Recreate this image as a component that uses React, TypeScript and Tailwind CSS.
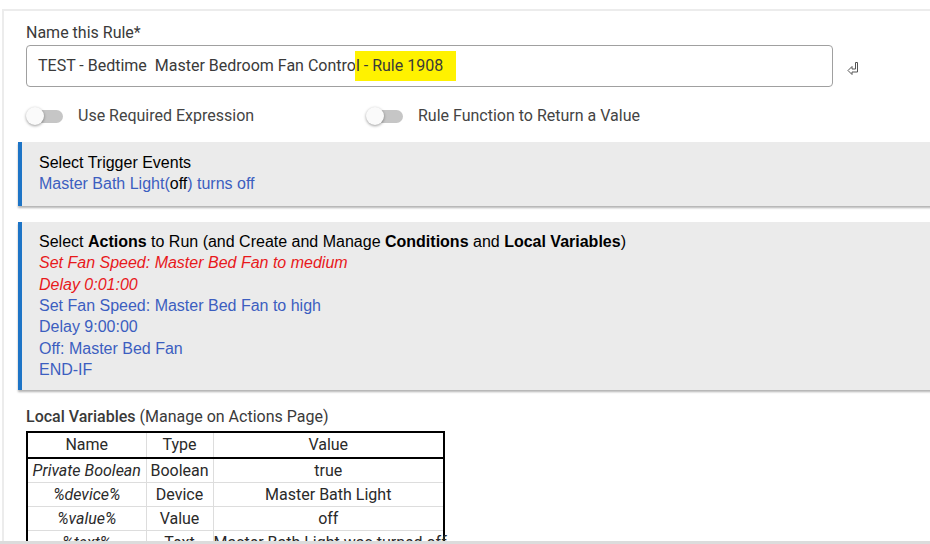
import React from "react";

const roboto = "font-['Roboto',_'Liberation_Sans',_sans-serif]";
const arial = "font-['Liberation_Sans',_Arial,_sans-serif]";

const Toggle = ({ label }: { label: string }) => (
  <div className="flex items-center">
    <div className="relative h-[18px] w-[37px]">
      <div className="absolute left-[9px] top-[3px] h-[13px] w-[28px] rounded-full bg-[#c6c6c6]" />
      <div className="absolute left-0 top-0 h-[18px] w-[18px] rounded-full bg-[#fafafa] shadow-[0_1px_3px_rgba(0,0,0,0.4)]" />
    </div>
    <span className="ml-[15px] text-[16px] text-[#444]">{label}</span>
  </div>
);

const ReturnIcon = () => (
  <svg width="12" height="14" viewBox="0 0 12 14" className="text-[#555]">
    <path
      d="M1 9.5 L5 5.5 L5 8 L8.5 8 L8.5 1.5 L10.5 1.5 L10.5 11 L5 11 L5 13.5 Z"
      fill="none"
      stroke="currentColor"
      strokeWidth="1"
      strokeLinejoin="miter"
    />
  </svg>
);

const variables = [
  { name: "Private Boolean", type: "Boolean", value: "true" },
  { name: "%device%", type: "Device", value: "Master Bath Light" },
  { name: "%value%", type: "Value", value: "off" },
  { name: "%text%", type: "Text", value: "Master Bath Light was turned off" },
];

export default function App() {
  return (
    <div
      className={`relative h-[544px] w-[930px] overflow-hidden bg-white ${roboto}`}
    >
      <div className="ml-[2px] mt-[9px] w-[960px] border-l-2 border-t-2 border-[#ececec] pl-[14px] pt-[10px]">
        {/* rule name */}
        <div className="pl-2">
          <label className="block text-[16px] leading-[24px] text-[#3a3a3a]">
            Name this Rule*
          </label>
          <div className="flex items-center">
            <div className="flex h-[42px] w-[807px] items-center rounded-[4px] border border-[#a0a0a0] px-[11px] text-[16px] text-[#3a3a3a] whitespace-pre">
              TEST - Bedtime  Master Bedroom Fan Contro
              <span className="-ml-[1px] bg-[#fff200] py-[3px] pl-[1px] pr-[13px]">
                l - Rule 1908
              </span>
            </div>
            <div className="ml-[14px] mt-[4px]">
              <ReturnIcon />
            </div>
          </div>

          <div className="mt-[17px] flex h-[24px] items-center">
            <div className="w-[340px]">
              <Toggle label="Use Required Expression" />
            </div>
            <Toggle label="Rule Function to Return a Value" />
          </div>
        </div>

        {/* triggers */}
        <div
          className={`mt-[14px] border-l-4 border-[#1d74c6] bg-[#ebebeb] pb-[11px] pl-[17px] pt-[10px] text-[16px] leading-[21.4px] shadow-[0_2px_2px_rgba(0,0,0,0.3)] ${arial}`}
        >
          <div className="text-black">Select Trigger Events</div>
          <div className="text-[#3c5ec0]">
            Master Bath Light(<span className="text-black">off</span>) turns
            off
          </div>
        </div>

        {/* actions */}
        <div
          className={`mt-[16px] border-l-4 border-[#1d74c6] bg-[#ebebeb] pb-[9px] pl-[17px] pt-[9px] text-[16px] leading-[21.4px] shadow-[0_2px_2px_rgba(0,0,0,0.3)] ${arial}`}
        >
          <div className="text-black">
            Select <b>Actions</b> to Run (and Create and Manage{" "}
            <b>Conditions</b> and <b>Local Variables</b>)
          </div>
          <div className="italic text-[#e8191b]">
            Set Fan Speed: Master Bed Fan to medium
          </div>
          <div className="italic text-[#e8191b]">Delay 0:01:00</div>
          <div className="text-[#3c5ec0]">Set Fan Speed: Master Bed Fan to high</div>
          <div className="text-[#3c5ec0]">Delay 9:00:00</div>
          <div className="text-[#3c5ec0]">Off: Master Bed Fan</div>
          <div className="text-[#3c5ec0]">END-IF</div>
        </div>

        {/* local variables */}
        <div className="pl-2">
          <div className="mt-[15px] text-[16px] leading-[24px] text-[#3a3a3a]">
            <span className="font-medium">Local Variables</span> (Manage on
            Actions Page)
          </div>
          <table className="mt-[2px] w-[419px] table-fixed border-collapse border-2 border-black text-[16px] text-[#2a2a2a]">
            <thead>
              <tr className="h-[26px] border-b-2 border-black">
                <th className="w-[119px] border-r border-[#ddd] font-normal">Name</th>
                <th className="w-[67px] border-r border-[#ddd] font-normal">Type</th>
                <th className="font-normal">Value</th>
              </tr>
            </thead>
            <tbody>
              {variables.map((v) => (
                <tr key={v.name} className="h-[24px] border-b border-[#ddd]">
                  <td className="whitespace-nowrap border-r border-[#ddd] text-center italic leading-[23px]">
                    {v.name}
                  </td>
                  <td className="whitespace-nowrap border-r border-[#ddd] text-center leading-[23px]">
                    {v.type}
                  </td>
                  <td className="whitespace-nowrap text-center leading-[23px]">
                    {v.value}
                  </td>
                </tr>
              ))}
            </tbody>
          </table>
        </div>
      </div>
      <div className="absolute bottom-0 left-0 h-[3px] w-full bg-[#dcdcdc]" />
    </div>
  );
}
